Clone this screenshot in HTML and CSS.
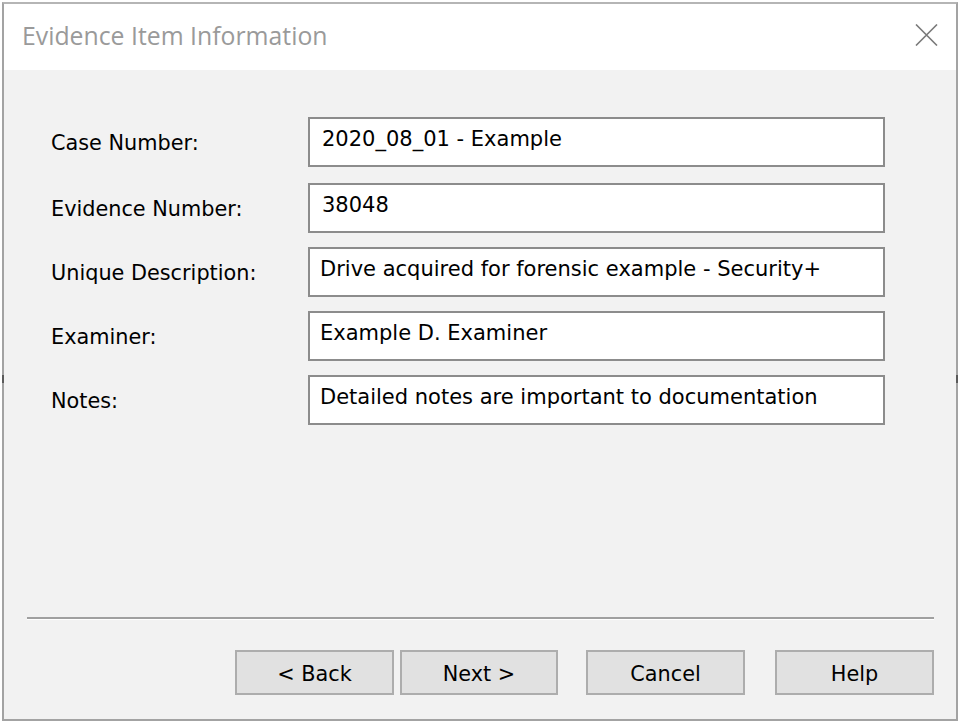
FILE: index.html
```html
<!DOCTYPE html>
<html>
<head>
<meta charset="utf-8">
<link rel="stylesheet" href="styles.css">
</head>
<body>
<div class="window">
  <div class="titlebar">
    <span class="title">Evidence Item Information</span>
    <svg class="close" width="23" height="22" viewBox="0 0 23 22"><path d="M1 0.5 L22 21.5 M22 0.5 L1 21.5" stroke="#7a7a7a" stroke-width="1.6" fill="none"/></svg>
  </div>
  <div class="content">
    <div class="form">
      <div class="row row-first"><div class="label">Case Number:</div><div class="field">2020_08_01 - Example</div></div>
      <div class="row"><div class="label">Evidence Number:</div><div class="field">38048</div></div>
      <div class="row"><div class="label">Unique Description:</div><div class="field field-tight">Drive acquired for forensic example - Security+</div></div>
      <div class="row"><div class="label">Examiner:</div><div class="field field-tight">Example D. Examiner</div></div>
      <div class="row"><div class="label">Notes:</div><div class="field field-tight">Detailed notes are important to documentation</div></div>
    </div>
    <div class="footer">
      <div class="separator"></div>
      <div class="buttons">
        <div class="btn btn-back">&lt; Back</div>
        <div class="btn btn-next">Next &gt;</div>
        <div class="btn btn-cancel">Cancel</div>
        <div class="btn btn-help">Help</div>
      </div>
    </div>
  </div>
  <span class="grip grip-left"></span>
  <span class="grip grip-right"></span>
</div>
</body>
</html>
```

FILE: styles.css
```css
html, body {
  margin: 0;
  padding: 0;
  background: #ffffff;
}
body {
  width: 962px;
  height: 723px;
  overflow: hidden;
  font-family: "DejaVu Sans", sans-serif;
}
.window {
  position: relative;
  box-sizing: border-box;
  margin: 2px 0 0 2px;
  width: 956px;
  height: 719px;
  border: 2px solid #a3a3a3;
  border-top-color: #b5b5b5;
  display: flex;
  flex-direction: column;
  background: #f2f2f2;
}
.titlebar {
  height: 66px;
  flex: none;
  background: #ffffff;
  display: flex;
  align-items: center;
  justify-content: space-between;
  padding: 0 18px 0 18px;
  box-sizing: border-box;
}
.title {
  font-family: "Open Sans", sans-serif;
  font-size: 24.8px;
  color: #9a9a9a;
  margin-top: -4px;
}
.close {
  margin-top: -5px;
}
.content {
  flex: 1;
  display: flex;
  flex-direction: column;
  background: #f2f2f2;
}
.form {
  padding: 47px 0 0 47px;
  display: flex;
  flex-direction: column;
  gap: 14px;
}
.row {
  display: flex;
  align-items: center;
  height: 50px;
}
.row-first {
  margin-bottom: 2px;
}
.label {
  width: 257px;
  font-size: 20.8px;
  color: #000;
  padding-top: 1px;
}
.field {
  box-sizing: border-box;
  width: 577px;
  height: 50px;
  border: 2px solid #8c8c8c;
  background: #ffffff;
  font-size: 21px;
  color: #000;
  padding: 8px 0 0 12px;
  white-space: nowrap;
}
.field-tight {
  padding-left: 10px;
}
.footer {
  margin-top: auto;
  padding: 0 22px 24px 23px;
}
.separator {
  height: 2px;
  background: #a0a0a0;
  border-bottom: 1px solid #ffffff;
}
.buttons {
  display: flex;
  justify-content: flex-end;
  margin-top: 30px;
}
.btn {
  box-sizing: border-box;
  width: 159px;
  height: 45px;
  background: #e1e1e1;
  border: 2px solid #adadad;
  font-size: 20.8px;
  color: #000;
  display: flex;
  align-items: center;
  justify-content: center;
  padding-top: 2px;
}
.btn-next { margin-left: 6px; width: 158px; }
.btn-cancel { margin-left: 28px; }
.btn-help { margin-left: 30px; }
.grip {
  position: absolute;
  top: 371px;
  width: 2px;
  height: 8px;
  background: #5a5a5a;
}
.grip-left { left: -2px; }
.grip-right { right: -2px; }
```
